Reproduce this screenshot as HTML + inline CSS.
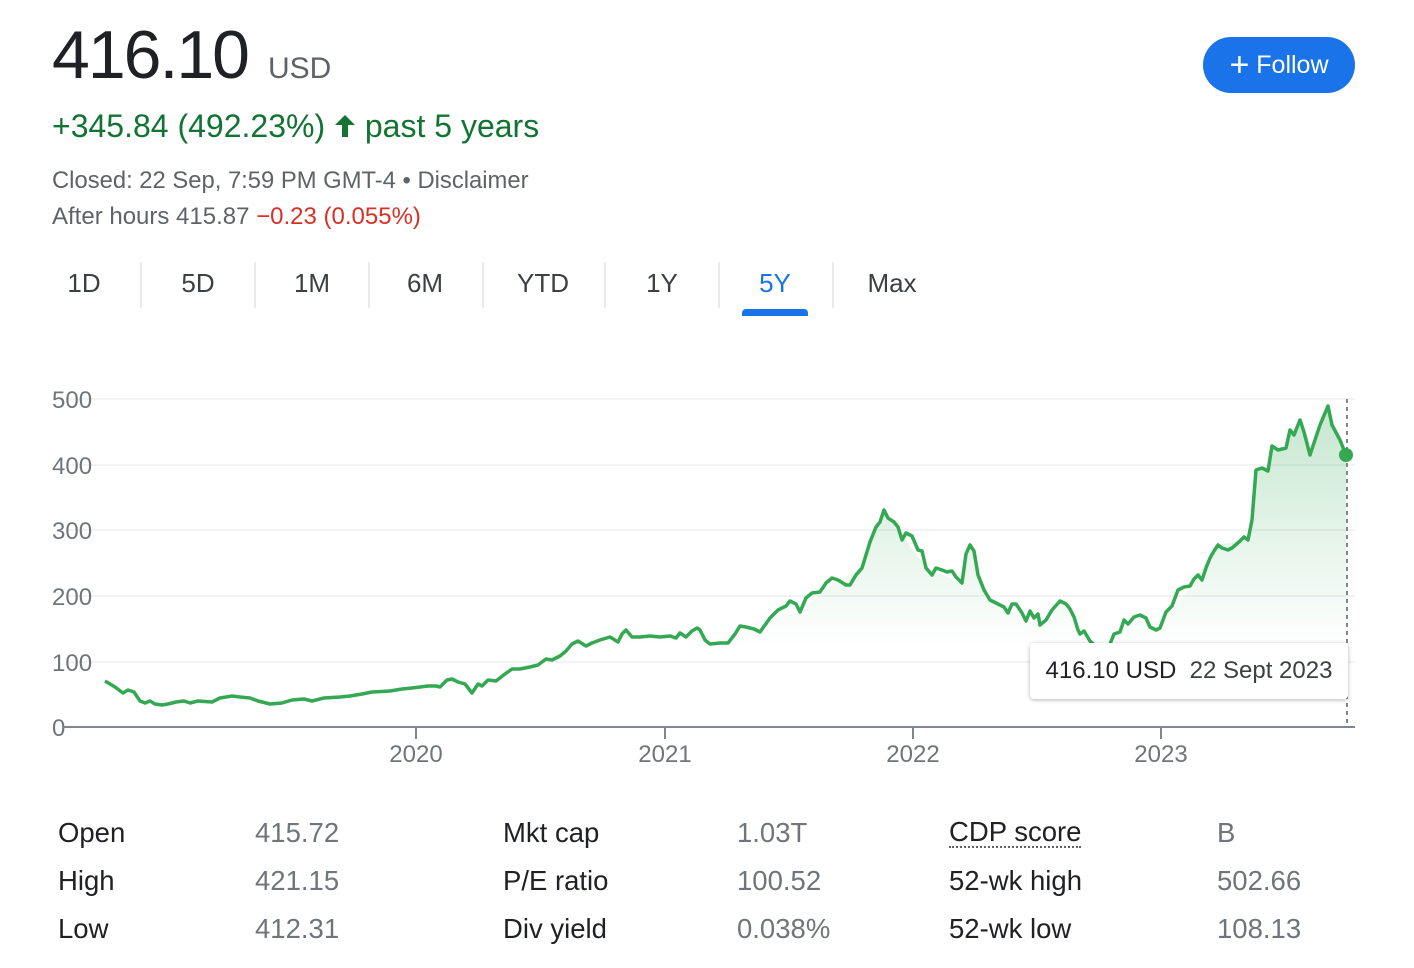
<!DOCTYPE html>
<html><head><meta charset="utf-8"><style>
body{margin:0;width:1414px;height:968px;background:#fff;font-family:"Liberation Sans",Arial,sans-serif;position:relative;overflow:hidden}
.a{position:absolute;white-space:nowrap}
.tab{position:absolute;top:268px;font-size:26px;color:#3c4043;text-align:center}
.sep{position:absolute;top:262px;width:2px;height:46px;background:#e8eaed}
.lab{position:absolute;font-size:27.5px;color:#202124}
.val{position:absolute;font-size:27.5px;color:#70757a}
</style></head><body>
<div class="a" style="left:52px;top:16px;font-size:68px;letter-spacing:-2px;color:#202124">416.10</div>
<div class="a" style="left:268px;top:52px;font-size:30px;color:#5f6368">USD</div>
<div class="a" style="left:52px;top:108px;font-size:32px;color:#137333">+345.84 (492.23%) <svg width="22" height="26" viewBox="0 0 22 26" style="vertical-align:-2px"><path d="M11 2 L21 12 H14 V24 H8 V12 H1 Z" fill="#137333"/></svg> past 5 years</div>
<div class="a" style="left:52px;top:167px;font-size:23.8px;color:#5f6368">Closed: 22 Sep, 7:59 PM GMT-4 • Disclaimer</div>
<div class="a" style="left:52px;top:203px;font-size:24px;color:#5f6368">After hours 415.87 <span style="color:#d93025">−0.23 (0.055%)</span></div>
<div class="a" style="left:1203px;top:37px;width:152px;height:56px;border-radius:28px;background:#1a73e8;color:#fff;font-size:25px;line-height:56px;text-align:center"><span style="font-size:34px;vertical-align:-3px">+</span> Follow</div>

<div class="tab" style="left:60px;width:48px">1D</div>
<div class="sep" style="left:140px"></div>
<div class="tab" style="left:174px;width:48px">5D</div>
<div class="sep" style="left:254px"></div>
<div class="tab" style="left:288px;width:48px">1M</div>
<div class="sep" style="left:368px"></div>
<div class="tab" style="left:401px;width:48px">6M</div>
<div class="sep" style="left:482px"></div>
<div class="tab" style="left:510px;width:66px">YTD</div>
<div class="sep" style="left:604px"></div>
<div class="tab" style="left:638px;width:48px">1Y</div>
<div class="sep" style="left:718px"></div>
<div class="tab" style="left:751px;width:48px;color:#1a73e8">5Y</div>
<div class="a" style="left:742px;top:309px;width:66px;height:7px;background:#1a73e8;border-radius:4px 4px 0 0"></div>
<div class="sep" style="left:832px"></div>
<div class="tab" style="left:864px;width:56px">Max</div>

<svg class="a" style="left:0;top:380px" width="1414" height="400" viewBox="0 380 1414 400">
<defs><linearGradient id="g" x1="0" y1="0" x2="0" y2="1"><stop offset="0" stop-color="#34a853" stop-opacity="0.28"/><stop offset="0.75" stop-color="#34a853" stop-opacity="0"/></linearGradient>
<path id="p" d="M105,681 L115,687 L123,693 L128,690 L134,692 L140,701 L145,703 L150,701 L155,704 L162,705 L168,704 L176,702 L184,701 L190,703 L198,701 L212,702 L220,698 L232,696 L240,697 L250,698 L258,701 L270,704 L282,703 L292,700 L304,699 L312,701 L324,698 L340,697 L350,696 L362,694 L372,692 L390,691 L402,689 L412,688 L420,687 L428,686 L436,686 L440,687 L447,680 L452,679 L458,682 L465,684 L472,693 L478,684 L482,686 L488,680 L496,681 L505,674 L512,669 L520,669 L530,667 L538,665 L546,659 L552,660 L560,656 L566,651 L572,644 L578,641 L586,646 L592,643 L600,640 L610,637 L618,642 L622,634 L626,630 L632,637 L640,637 L650,636 L660,637 L670,636 L676,638 L680,633 L686,637 L692,631 L697,628 L700,630 L705,640 L710,644 L720,643 L728,643 L735,634 L740,626 L746,627 L754,629 L760,632 L770,618 L778,610 L786,606 L790,601 L796,604 L800,612 L806,598 L812,593 L820,592 L826,583 L832,578 L838,580 L846,585 L850,585 L856,575 L862,568 L870,542 L876,527 L880,522 L884,510 L888,518 L894,522 L898,527 L902,540 L906,533 L912,536 L918,550 L922,551 L926,568 L932,575 L936,568 L942,570 L947,572 L952,571 L956,577 L962,583 L966,554 L970,545 L974,551 L978,575 L984,590 L990,600 L998,604 L1004,607 L1008,613 L1012,604 L1016,604 L1022,613 L1026,621 L1030,611 L1034,618 L1038,614 L1040,625 L1046,620 L1052,610 L1060,601 L1066,604 L1070,609 L1074,617 L1078,630 L1080,634 L1084,631 L1090,641 L1100,650 L1110,644 L1114,634 L1120,632 L1124,620 L1128,624 L1134,617 L1140,615 L1146,618 L1150,627 L1156,630 L1160,628 L1166,612 L1172,606 L1178,590 L1184,587 L1190,586 L1194,579 L1198,575 L1202,580 L1206,568 L1210,558 L1214,551 L1218,545 L1222,548 L1228,550 L1232,548 L1240,541 L1244,537 L1248,540 L1252,520 L1256,470 L1262,468 L1268,471 L1272,446 L1278,450 L1286,448 L1290,430 L1294,435 L1300,420 L1304,432 L1310,455 L1320,425 L1328,406 L1332,425 L1340,440 L1346,455"/></defs>
<g stroke="#f1f3f4" stroke-width="2"><line x1="68" y1="399" x2="1355" y2="399"/><line x1="68" y1="465" x2="1355" y2="465"/><line x1="68" y1="530" x2="1355" y2="530"/><line x1="68" y1="596" x2="1355" y2="596"/><line x1="68" y1="662" x2="1355" y2="662"/></g>
<g font-size="24" fill="#70757a" font-family="Liberation Sans,sans-serif"><text x="52" y="408">500</text><text x="52" y="474">400</text><text x="52" y="539">300</text><text x="52" y="605">200</text><text x="52" y="671">100</text><text x="52" y="736">0</text>
<text x="416" y="762" text-anchor="middle">2020</text><text x="665" y="762" text-anchor="middle">2021</text><text x="913" y="762" text-anchor="middle">2022</text><text x="1161" y="762" text-anchor="middle">2023</text></g>
<path d="M105,681 L115,687 L123,693 L140,701 L162,705 L212,702 L258,701 L270,704 L340,697 L440,687 L472,693 L520,669 L578,641 L700,630 L710,644 L740,626 L800,612 L838,580 L862,568 L884,510 L926,568 L962,583 L970,545 L990,600 L1040,625 L1060,601 L1090,641 L1100,650 L1120,632 L1140,615 L1160,628 L1190,586 L1218,545 L1248,540 L1252,520 L1256,470 L1262,468 L1268,471 L1272,446 L1278,450 L1286,448 L1290,430 L1294,435 L1300,420 L1304,432 L1310,455 L1320,425 L1328,406 L1332,425 L1340,440 L1346,455 L1346,727 L105,727 Z" fill="url(#g)"/>
<use href="#p" fill="none" stroke="#34a853" stroke-width="3.5" stroke-linejoin="round"/>
<line x1="1347" y1="399" x2="1347" y2="727" stroke="#80868b" stroke-width="2" stroke-dasharray="4,4"/>
<line x1="62" y1="727" x2="1355" y2="727" stroke="#80868b" stroke-width="2"/>
<g stroke="#80868b" stroke-width="2"><line x1="416" y1="727" x2="416" y2="739"/><line x1="665" y1="727" x2="665" y2="739"/><line x1="913" y1="727" x2="913" y2="739"/><line x1="1161" y1="727" x2="1161" y2="739"/></g>
<circle cx="1346" cy="455" r="7" fill="#34a853"/>
</svg>
<div class="a" style="left:1030px;top:643px;width:318px;height:56px;background:#fff;border-radius:4px;box-shadow:0 1px 4px rgba(0,0,0,.3);font-size:24px;line-height:56px;color:#202124;text-align:center">416.10 USD&nbsp; <span style="color:#3c4043">22 Sept 2023</span></div>

<div class="lab" style="left:58px;top:817px">Open</div><div class="val" style="left:255px;top:817px">415.72</div>
<div class="lab" style="left:58px;top:865px">High</div><div class="val" style="left:255px;top:865px">421.15</div>
<div class="lab" style="left:58px;top:913px">Low</div><div class="val" style="left:255px;top:913px">412.31</div>
<div class="lab" style="left:503px;top:817px">Mkt cap</div><div class="val" style="left:737px;top:817px">1.03T</div>
<div class="lab" style="left:503px;top:865px">P/E ratio</div><div class="val" style="left:737px;top:865px">100.52</div>
<div class="lab" style="left:503px;top:913px">Div yield</div><div class="val" style="left:737px;top:913px">0.038%</div>
<div class="lab" style="left:949px;top:817px;border-bottom:2px dotted #5f6368;line-height:29px">CDP score</div><div class="val" style="left:1217px;top:817px">B</div>
<div class="lab" style="left:949px;top:865px">52-wk high</div><div class="val" style="left:1217px;top:865px">502.66</div>
<div class="lab" style="left:949px;top:913px">52-wk low</div><div class="val" style="left:1217px;top:913px">108.13</div>
</body></html>
